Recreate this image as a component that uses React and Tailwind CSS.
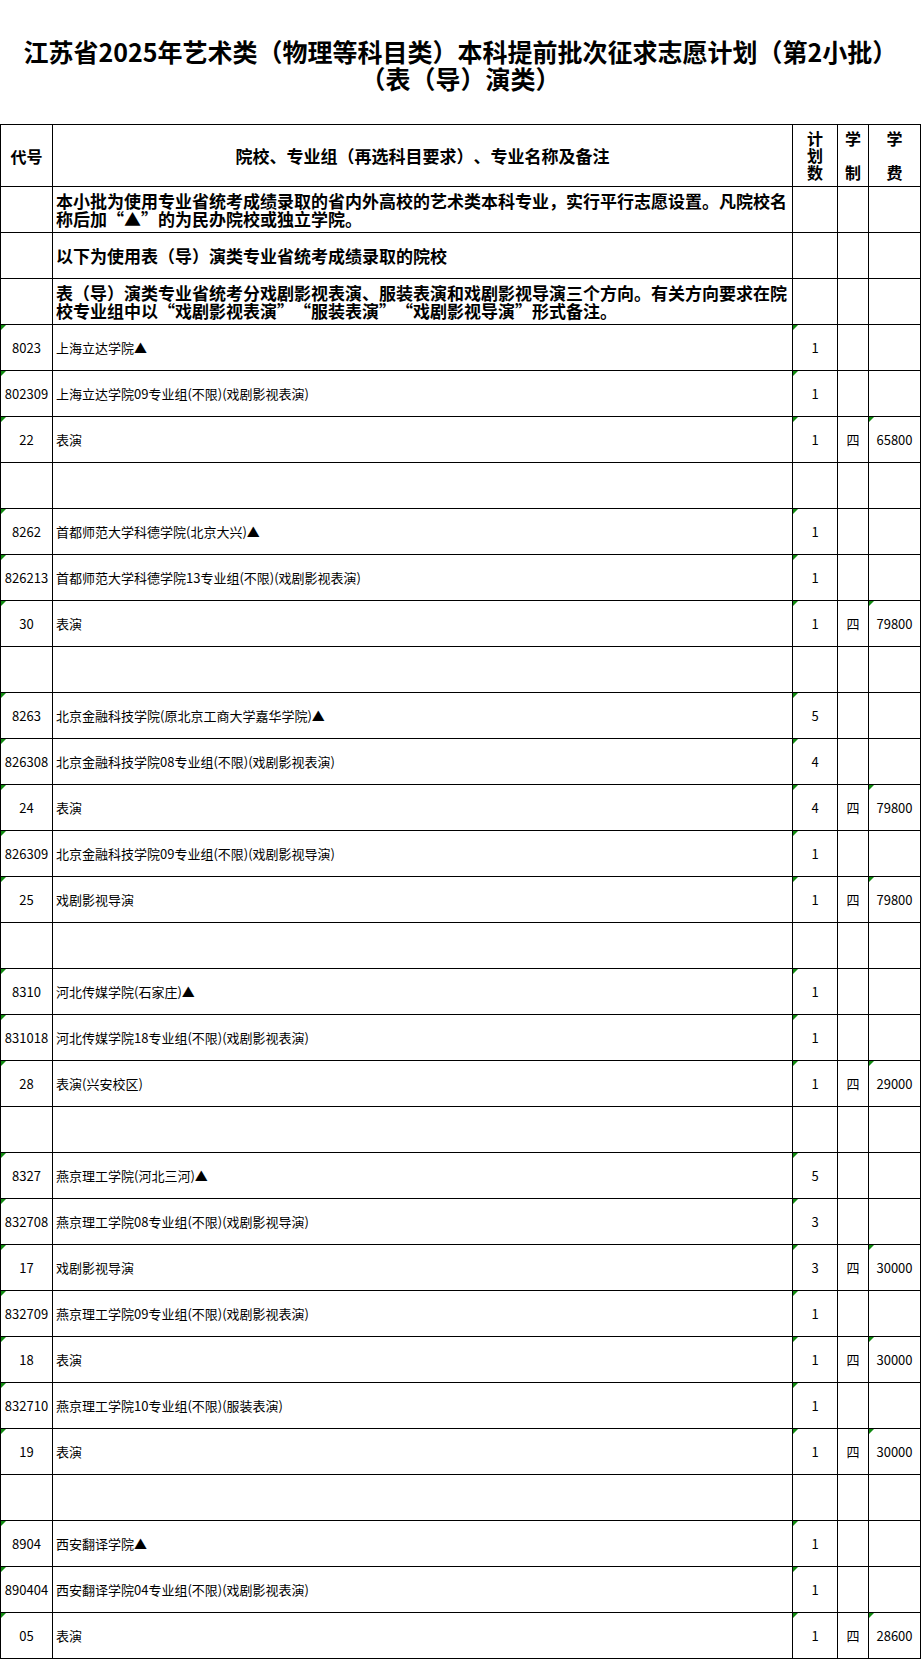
import React from "react";

// 数据行：[代号, 名称, 计划数, 学制, 学费]，null 为空行
const rows = [
  ["8023", "上海立达学院▲", "1"],
  ["802309", "上海立达学院09专业组(不限)(戏剧影视表演)", "1"],
  ["22", "表演", "1", "四", "65800"],
  null,
  ["8262", "首都师范大学科德学院(北京大兴)▲", "1"],
  ["826213", "首都师范大学科德学院13专业组(不限)(戏剧影视表演)", "1"],
  ["30", "表演", "1", "四", "79800"],
  null,
  ["8263", "北京金融科技学院(原北京工商大学嘉华学院)▲", "5"],
  ["826308", "北京金融科技学院08专业组(不限)(戏剧影视表演)", "4"],
  ["24", "表演", "4", "四", "79800"],
  ["826309", "北京金融科技学院09专业组(不限)(戏剧影视导演)", "1"],
  ["25", "戏剧影视导演", "1", "四", "79800"],
  null,
  ["8310", "河北传媒学院(石家庄)▲", "1"],
  ["831018", "河北传媒学院18专业组(不限)(戏剧影视表演)", "1"],
  ["28", "表演(兴安校区)", "1", "四", "29000"],
  null,
  ["8327", "燕京理工学院(河北三河)▲", "5"],
  ["832708", "燕京理工学院08专业组(不限)(戏剧影视导演)", "3"],
  ["17", "戏剧影视导演", "3", "四", "30000"],
  ["832709", "燕京理工学院09专业组(不限)(戏剧影视表演)", "1"],
  ["18", "表演", "1", "四", "30000"],
  ["832710", "燕京理工学院10专业组(不限)(服装表演)", "1"],
  ["19", "表演", "1", "四", "30000"],
  null,
  ["8904", "西安翻译学院▲", "1"],
  ["890404", "西安翻译学院04专业组(不限)(戏剧影视表演)", "1"],
  ["05", "表演", "1", "四", "28600"],
];

const notes = [
  [
    "本小批为使用专业省统考成绩录取的省内外高校的艺术类本科专业，实行平行志愿设置。凡院校名",
    "称后加“▲”的为民办院校或独立学院。",
  ],
  ["以下为使用表（导）演类专业省统考成绩录取的院校"],
  [
    "表（导）演类专业省统考分戏剧影视表演、服装表演和戏剧影视导演三个方向。有关方向要求在院",
    "校专业组中以“戏剧影视表演”“服装表演”“戏剧影视导演”形式备注。",
  ],
];

// Excel 的绿色小三角
const Flag = () => (
  <span className="absolute left-0 top-0 h-0 w-0 border-t-[5px] border-r-[5px] border-t-[#108a10] border-r-transparent"></span>
);

const cell = "border border-black p-0 relative";

export default function App() {
  return (
    <div
      className="w-[921px] bg-white text-black [text-spacing-trim:space-all]"
      style={{ fontFamily: '"Noto Sans CJK SC", "Noto Sans", sans-serif' }}
    >
      <div className="pt-[38px] pb-[32px] text-center text-[25px] font-bold leading-[27px]">
        <div>江苏省2025年艺术类（物理等科目类）本科提前批次征求志愿计划（第2小批）</div>
        <div>（表（导）演类）</div>
      </div>

      <table className="w-[920px] table-fixed border-collapse">
        <colgroup>
          <col className="w-[52px]" />
          <col className="w-[740px]" />
          <col className="w-[45px]" />
          <col className="w-[31px]" />
          <col className="w-[52px]" />
        </colgroup>
        <thead>
          <tr className="h-[62px] font-bold">
            <th className={`${cell} text-[16px]`}>代号</th>
            <th className={`${cell} text-[17px] font-bold`}>院校、专业组（再选科目要求）、专业名称及备注</th>
            <th className={`${cell} text-[16px] leading-[17px]`}>
              计<br />划<br />数
            </th>
            <th className={`${cell} text-[16px] leading-[17px]`}>
              学<br />&nbsp;<br />制
            </th>
            <th className={`${cell} text-[16px] leading-[17px]`}>
              学<br />&nbsp;<br />费
            </th>
          </tr>
        </thead>
        <tbody>
          {notes.map((lines, i) => (
            <tr key={"n" + i} className="h-[46px]">
              <td className={cell}></td>
              <td className={`${cell} pl-[3px] text-[17px] font-bold leading-[18px] whitespace-nowrap`}>
                {lines.map((l, j) => (
                  <div key={j}>{l}</div>
                ))}
              </td>
              <td className={cell}></td>
              <td className={cell}></td>
              <td className={cell}></td>
            </tr>
          ))}
          {rows.map((r, i) =>
            r ? (
              <tr key={i} className="h-[46px] text-[13px]">
                <td className={`${cell} text-center`}>
                  <Flag />
                  {r[0]}
                </td>
                <td className={`${cell} pl-[3px] whitespace-nowrap`}>{r[1]}</td>
                <td className={`${cell} text-center`}>
                  <Flag />
                  {r[2]}
                </td>
                <td className={`${cell} text-center`}>{r[3] || ""}</td>
                <td className={`${cell} text-center`}>
                  {r[4] && <Flag />}
                  {r[4] || ""}
                </td>
              </tr>
            ) : (
              <tr key={i} className="h-[46px]">
                <td className={cell}></td>
                <td className={cell}></td>
                <td className={cell}></td>
                <td className={cell}></td>
                <td className={cell}></td>
              </tr>
            )
          )}
        </tbody>
      </table>
    </div>
  );
}
